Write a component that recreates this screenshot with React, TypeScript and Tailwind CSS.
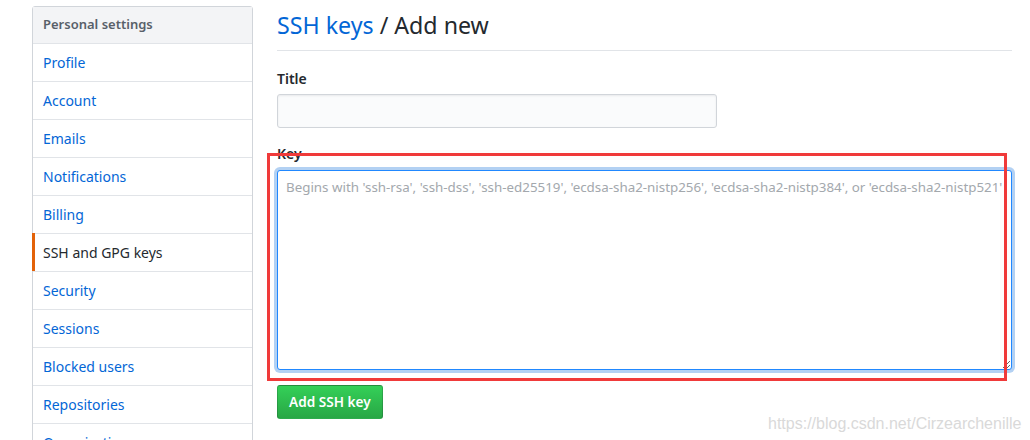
import React from "react";

const items = [
  "Profile",
  "Account",
  "Emails",
  "Notifications",
  "Billing",
  "SSH and GPG keys",
  "Security",
  "Sessions",
  "Blocked users",
  "Repositories",
  "Organizations",
];

export default function App() {
  return (
    <div
      className="relative w-[1030px] h-[440px] overflow-hidden bg-white"
      style={{ fontFamily: '"Noto Sans", "Segoe UI", Arial, sans-serif' }}
    >
      <div className="flex pl-[32px] pt-[6px]">
        {/* Sidebar */}
        <nav className="w-[221px] shrink-0 border border-[#d1d5da] rounded-[3px] self-start">
          <div className="h-[37px] px-[10px] flex items-center bg-[#f3f4f6] border-b border-[#e1e4e8] text-[13px] font-semibold text-[#586069]">
            Personal settings
          </div>
          {items.map((it) => {
            const active = it === "SSH and GPG keys";
            return (
              <div
                key={it}
                className={
                  active
                    ? "relative h-[38px] px-[10px] flex items-center border-b border-[#e1e4e8] text-[14px] text-[#24292e]"
                    : "relative h-[38px] px-[10px] flex items-center border-b border-[#e1e4e8] text-[14px] text-[#0366d6]"
                }
              >
                {active && (
                  <span className="absolute left-[-1px] top-[-1px] bottom-0 w-[3px] bg-[#e36209]" />
                )}
                {it}
              </div>
            );
          })}
        </nav>

        {/* Main */}
        <main className="ml-[24px] w-[735px]">
          <div className="mt-[1px] pb-[7px] border-b border-[#e1e4e8]">
            <h2 className="text-[23.2px] leading-[36px] font-normal text-[#24292e]">
              <span className="text-[#0366d6]">SSH keys</span> / Add new
            </h2>
          </div>

          <div className="mt-[17px]">
            <label className="block text-[14px] leading-[21px] font-semibold text-[#24292e] mb-[5px]">
              Title
            </label>
            <input
              type="text"
              className="block w-[440px] h-[34px] bg-[#fafbfc] border border-[#d1d5da] rounded-[3px] outline-none shadow-[inset_0_1px_2px_rgba(27,31,35,0.075)]"
            />
          </div>

          <div className="mt-[15px]">
            <label className="block text-[14px] leading-[21px] font-semibold text-[#24292e] mb-[6px]">
              Key
            </label>
            <textarea
              className="block w-[735px] h-[200px] px-[8px] py-[6px] text-[13.35px] leading-[21px] bg-white border border-[#2188ff] rounded-[3px] outline-none shadow-[0_0_0_3px_rgba(3,102,214,0.3)] placeholder:text-[#a3a8ad]"
              placeholder="Begins with 'ssh-rsa', 'ssh-dss', 'ssh-ed25519', 'ecdsa-sha2-nistp256', 'ecdsa-sha2-nistp384', or 'ecdsa-sha2-nistp521'"
            />
          </div>

          <button className="mt-[15px] h-[34px] px-[11px] rounded-[3px] border border-[rgba(27,31,35,0.2)] bg-gradient-to-b from-[#34d058] to-[#28a745] text-white text-[13.6px] font-semibold">
            Add SSH key
          </button>
        </main>
      </div>

      {/* Red annotation box */}
      <div className="absolute left-[267px] top-[153px] w-[740px] h-[228px] border-[3px] border-[#f03a3a] pointer-events-none" />

      {/* Watermark */}
      <div
        className="absolute left-[768px] top-[414px] text-[16px] leading-[20px] text-[#d9d9d9]"
        style={{ fontFamily: '"Liberation Sans", Arial, sans-serif' }}
      >
        https://blog.csdn.net/Cirzearchenille
      </div>
    </div>
  );
}
